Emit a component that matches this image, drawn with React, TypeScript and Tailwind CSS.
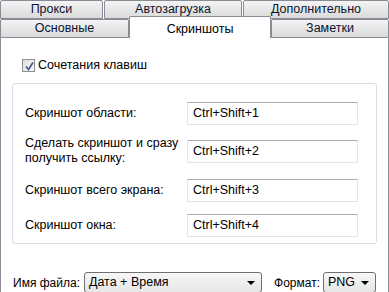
import { ReactNode } from 'react';

const font = { fontFamily: '"Liberation Sans", Arial, sans-serif' };

function Tab({ w, children }: { w: string; children: ReactNode }) {
  return (
    <div
      className={`${w} h-[19px] shrink-0 flex items-center justify-center border border-[#898c95] rounded-t-[2px] bg-gradient-to-b from-[#f4f4f4] to-[#dadada] text-[12.5px] text-[#0b1330] whitespace-nowrap`}
    >
      {children}
    </div>
  );
}

function Field({ value }: { value: string }) {
  return (
    <div className="w-[171px] h-[23px] shrink-0 flex items-center pl-[5px] bg-white border border-[#e0e6ec] border-t-[#abadb3] text-[12.5px] text-black">
      {value}
    </div>
  );
}

function Select({ w, value }: { w: string; value: string }) {
  return (
    <div
      className={`${w} h-[21px] flex items-center justify-between pl-[4px] pr-[6px] rounded-[3px] border border-[#707070] bg-gradient-to-b from-[#f7f7f7] to-[#e6e6e6] text-[12.5px] text-black whitespace-nowrap`}
    >
      <span>{value}</span>
      <svg width="8" height="4" viewBox="0 0 8 4">
        <path d="M0 0H8L4 4Z" fill="#000" />
      </svg>
    </div>
  );
}

const shortcuts = [
  { label: ['Скриншот области:'], value: 'Ctrl+Shift+1', mt: 'mt-[18px]' },
  { label: ['Сделать скриншот и сразу', 'получить ссылку:'], value: 'Ctrl+Shift+2', mt: 'mt-[11px]' },
  { label: ['Скриншот всего экрана:'], value: 'Ctrl+Shift+3', mt: 'mt-[13px]' },
  { label: ['Скриншот окна:'], value: 'Ctrl+Shift+4', mt: 'mt-[12px]' },
];

export default function App() {
  return (
    <div className="w-[389px] h-[292px] overflow-hidden bg-white flex flex-col" style={font}>
      {/* Tabs, back row */}
      <div className="flex gap-[1px]">
        <Tab w="w-[103px]">Прокси</Tab>
        <Tab w="w-[138px]">Автозагрузка</Tab>
        <Tab w="w-[146px]">Дополнительно</Tab>
      </div>

      {/* Tabs, front row */}
      <div className="flex items-end h-[19px]">
        <Tab w="w-[129px]">Основные</Tab>
        <div className="w-[142px] h-[22px] -mt-[3px] shrink-0 flex items-start justify-center pt-[3px] bg-white border border-b-0 border-[#898c95] rounded-t-[2px] text-[12.5px] text-black">
          Скриншоты
        </div>
        <Tab w="w-[118px]">Заметки</Tab>
      </div>

      {/* Panel */}
      <div className="flex-1 w-[389px] border-x border-[#898c95] px-[11px] flex flex-col">
        <div className="flex items-center gap-[3px] ml-[10px] mt-[21px] h-[13px]">
          <div className="w-[13px] h-[13px] border border-[#8e8f8f] bg-gradient-to-br from-[#dedede] to-[#fbfbfb] p-[1px]">
            <svg width="11" height="11" viewBox="0 0 11 11">
              <path d="M2 5.5L4.5 8.5L9 1.5" fill="none" stroke="#4a5f97" strokeWidth="1.8" />
            </svg>
          </div>
          <span className="text-[12.5px] text-black">Сочетания клавиш</span>
        </div>

        <div className="mt-[11px] h-[161px] border border-[#d5dfe5] rounded-[3px] pl-[12px] flex flex-col">
          {shortcuts.map((s) => (
            <div key={s.value} className={`flex items-center ${s.mt}`}>
              <div className="w-[162px] shrink-0 text-[12.5px] leading-[15px] text-black whitespace-nowrap">
                {s.label.map((l) => (
                  <div key={l}>{l}</div>
                ))}
              </div>
              <Field value={s.value} />
            </div>
          ))}
        </div>

        <div className="mt-[28px] flex items-center pl-[1px] pr-[1px]">
          <span className="text-[12px] text-black shrink-0 whitespace-nowrap mr-[4px]">Имя файла:</span>
          <Select w="flex-1 min-w-0" value="Дата + Время" />
          <span className="text-[12px] text-black shrink-0 whitespace-nowrap ml-[12px] mr-[3px]">Формат:</span>
          <Select w="w-[53px] shrink-0" value="PNG" />
        </div>
      </div>
    </div>
  );
}
